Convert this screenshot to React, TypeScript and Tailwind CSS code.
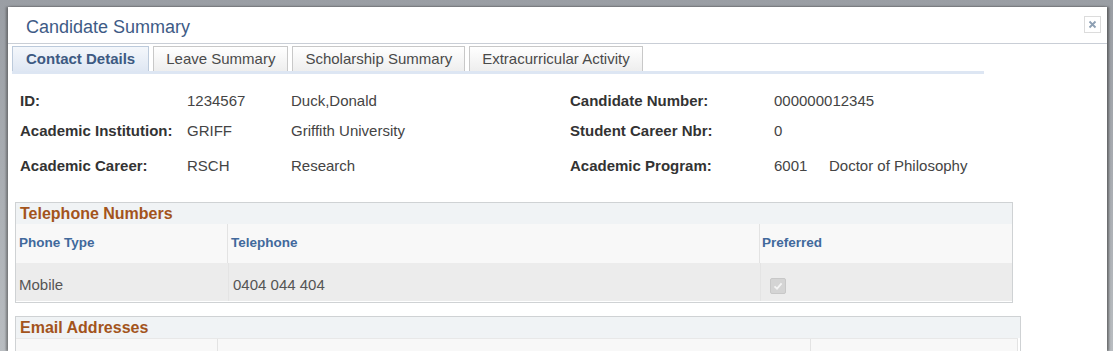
import React from 'react';

const tabs = ['Contact Details', 'Leave Summary', 'Scholarship Summary', 'Extracurricular Activity'];

interface FieldProps {
  label: string;
  code: string;
  desc?: string;
  codeWidth: string;
  labelWidth: string;
}

const Field: React.FC<FieldProps> = ({ label, code, desc, codeWidth, labelWidth }) => (
  <div className="flex items-center">
    <div className={`${labelWidth} font-bold text-[#333]`}>{label}</div>
    <div className={`${codeWidth} text-[#444]`}>{code}</div>
    {desc && <div className="text-[#444]">{desc}</div>}
  </div>
);

const CheckedBox = () => (
  <div className="w-4 h-4 rounded-[2px] bg-[#d4d4d4] border border-[#c8c8c8] flex items-center justify-center">
    <svg width="12" height="12" viewBox="0 0 12 12">
      <path d="M2.5 6.3 L5 8.6 L9.6 3.4" fill="none" stroke="#f4f4f4" strokeWidth="1.8" />
    </svg>
  </div>
);

const App: React.FC = () => {
  return (
    <div
      className="w-[1113px] h-[351px] overflow-hidden bg-gradient-to-b from-[#9a9ea4] to-[#b9bdc1] pt-[7px] pl-[8px] pr-[6px] text-[15px]"
      style={{ fontFamily: '"Liberation Sans", Arial, sans-serif' }}
    >
      <div className="h-full bg-white shadow-[-2px_0_2px_rgba(60,60,60,0.5),2px_0_2px_rgba(60,60,60,0.6)]">
        {/* header */}
        <div className="h-[37px] border-b border-[#c9ced6] flex items-center justify-between pl-[18px] pr-[6px]">
          <div className="text-[18px] text-[#3e5b86] pt-[4px]">Candidate Summary</div>
          <div className="w-[17px] h-[17px] border border-[#dcdcdc] flex items-center justify-center mb-[1px]">
            <svg width="9" height="9" viewBox="0 0 9 9">
              <path d="M1.5 1.5 L7.5 7.5 M7.5 1.5 L1.5 7.5" stroke="#8d9fb3" strokeWidth="1.8" />
            </svg>
          </div>
        </div>

        {/* tabs */}
        <div className="pl-[4px] pt-[2px]">
          <div className="w-[972px] flex gap-[4px] border-b-[3px] border-[#dde6f3]">
            {tabs.map((t, i) => (
              <div
                key={t}
                className={
                  i === 0
                    ? 'h-[25px] px-[13px] flex items-center border border-b-0 border-[#bccadb] bg-gradient-to-b from-[#f4f7fb] to-[#dfe7f3] font-bold text-[#3d5a82]'
                    : 'h-[25px] px-[12px] flex items-center border border-b-0 border-[#c8c8c8] bg-gradient-to-b from-white to-[#eeeeee] text-[#4a4a4a]'
                }
              >
                {t}
              </div>
            ))}
          </div>
        </div>

        {/* fields */}
        <div className="pt-[12px] pl-[12px] flex">
          <div className="w-[550px]">
            <div className="h-[30px] flex items-center">
              <Field label="ID:" code="1234567" desc="Duck,Donald" labelWidth="w-[167px]" codeWidth="w-[104px]" />
            </div>
            <div className="h-[30px] flex items-center">
              <Field label="Academic Institution:" code="GRIFF" desc="Griffith University" labelWidth="w-[167px]" codeWidth="w-[104px]" />
            </div>
            <div className="h-[40px] flex items-center">
              <Field label="Academic Career:" code="RSCH" desc="Research" labelWidth="w-[167px]" codeWidth="w-[104px]" />
            </div>
          </div>
          <div>
            <div className="h-[30px] flex items-center">
              <Field label="Candidate Number:" code="000000012345" labelWidth="w-[204px]" codeWidth="w-[55px]" />
            </div>
            <div className="h-[30px] flex items-center">
              <Field label="Student Career Nbr:" code="0" labelWidth="w-[204px]" codeWidth="w-[55px]" />
            </div>
            <div className="h-[40px] flex items-center">
              <Field label="Academic Program:" code="6001" desc="Doctor of Philosophy" labelWidth="w-[204px]" codeWidth="w-[55px]" />
            </div>
          </div>
        </div>

        {/* telephone numbers */}
        <div className="ml-[7px] mt-[16px] w-[998px] border border-[#cfd2d4]">
          <div className="h-[21px] bg-[#f0f3f5] pl-[4px] flex items-center text-[16px] font-bold text-[#a3541c]">
            Telephone Numbers
          </div>
          <div className="flex h-[39px] bg-[#f8f8f8] text-[13.5px] font-bold text-[#41699c]">
            <div className="w-[212px] border-r border-[#e3e3e3] pl-[3px] flex items-center">Phone Type</div>
            <div className="w-[532px] border-r border-[#e3e3e3] pl-[3px] flex items-center">Telephone</div>
            <div className="flex-1 pl-[2px] flex items-center">Preferred</div>
          </div>
          <div className="flex h-[38px] bg-[#ececec] text-[#555] mb-[1px]">
            <div className="w-[213px] border-r border-[#e4e4e4] pl-[3px] flex items-center pt-[7px]">Mobile</div>
            <div className="w-[532px] border-r border-[#e4e4e4] pl-[4px] flex items-center pt-[7px]">0404 044 404</div>
            <div className="flex-1 pl-[9px] flex items-center pt-[7px]">
              <CheckedBox />
            </div>
          </div>
        </div>

        {/* email addresses */}
        <div className="ml-[7px] mt-[13px] w-[1006px] h-[60px] border border-[#cfd2d4]">
          <div className="h-[21px] bg-[#f0f3f5] pl-[4px] flex items-center text-[16px] font-bold text-[#a3541c]">
            Email Addresses
          </div>
          <div className="flex h-[39px] bg-[#f8f8f8] mr-[2px] border-t border-[#e8e8e8]">
            <div className="w-[202px] border-r border-[#e3e3e3]" />
            <div className="w-[593px] border-r border-[#e3e3e3]" />
            <div className="flex-1 border-r border-[#e3e3e3]" />
          </div>
        </div>
      </div>
    </div>
  );
};

export default App;
